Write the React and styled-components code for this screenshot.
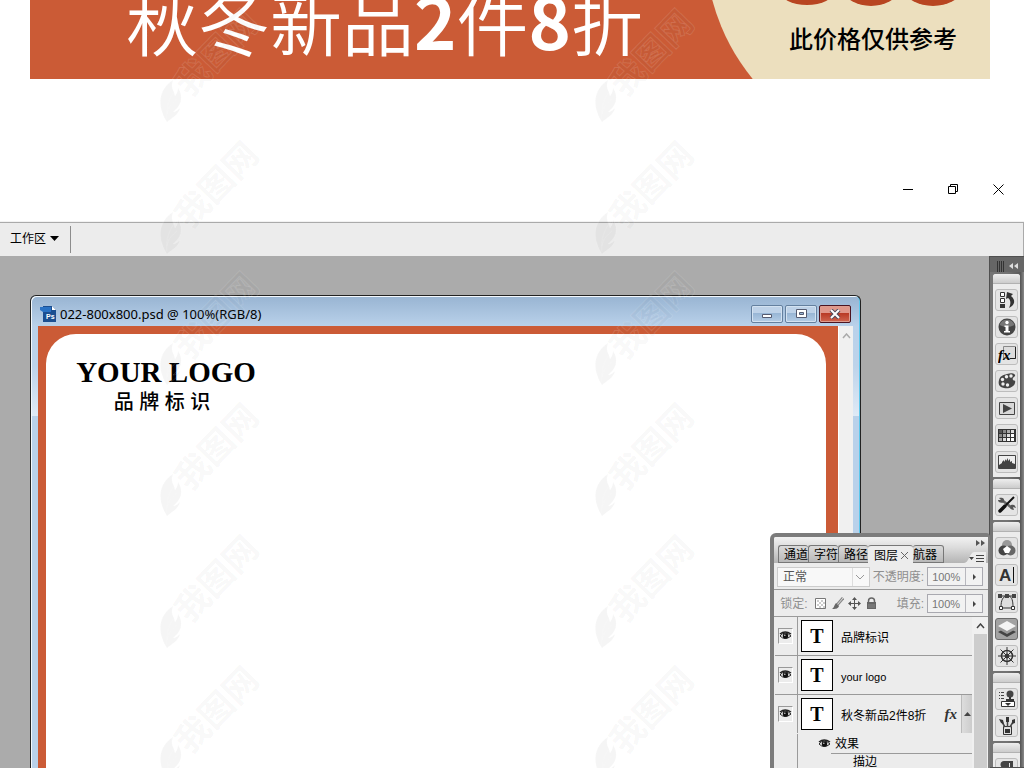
import { useState } from 'react'
import styled, { createGlobalStyle } from 'styled-components'

const GlobalStyle = createGlobalStyle`
  * {
    box-sizing: border-box;
  }
  body {
    margin: 0;
    background: #fff;
    color: #000;
    font-family: "Liberation Sans", "Noto Sans CJK SC", sans-serif;
    font-size: 12px;
    line-height: 16px;
  }
  button, input, select {
    font: inherit;
    color: inherit;
    padding: 0;
    margin: 0;
    border: 0;
    border-radius: 0;
    background: none;
  }
  svg {
    display: block;
    flex: none;
  }
`

const Page = styled.div`
  position: relative;
  display: flex;
  flex-direction: column;
  height: 100vh;
  overflow: hidden;
`

/* ---------- promo banner ---------- */

const Banner = styled.section`
  display: flex;
  justify-content: space-between;
  flex: none;
  height: 79px;
  margin: 0 34px 0 30px;
  background: #cb5b36;
  overflow: hidden;
`

const Headline = styled.h1`
  display: flex;
  align-items: flex-end;
  margin: 0 0 16px 96px;
  color: #fff;
  font-family: "Noto Sans CJK SC", sans-serif;
  font-size: 72px;
  font-weight: 350;
  line-height: 88px;
  white-space: nowrap;

  b {
    font-weight: 700;
  }
`

const PriceArea = styled.div`
  display: grid;
  width: 280px;

  > * {
    grid-area: 1 / 1;
  }
`

const PriceNote = styled.p`
  margin: 22px 0 0 79px;
  font-family: "Noto Sans CJK SC", sans-serif;
  font-size: 24px;
  font-weight: 500;
  line-height: 32px;
`

/* ---------- application frame ---------- */

const AppControls = styled.div`
  display: flex;
  flex: none;
  justify-content: flex-end;
  height: 66px;
  margin-top: 77px;
  padding-right: 3px;
`

const AppControl = styled.button`
  display: flex;
  align-items: center;
  justify-content: center;
  width: 45px;
`

const OptionsBar = styled.div`
  display: flex;
  flex: none;
  height: 34px;
  padding: 3px 0;
  background: #ececec;
  border-top: 1px solid #aaa;
  border-right: 1px solid #aaa;
  box-shadow: 0 -1px 0 #f2f2f2;
`

const WorkspaceButton = styled.button`
  display: flex;
  align-items: center;
  gap: 4px;
  width: 71px;
  padding-left: 10px;
  padding-bottom: 2px;
  border-right: 1px solid #8c8c8c;
`

const Desktop = styled.main`
  position: relative;
  display: flex;
  flex: 1;
  min-height: 0;
  background: #ababab;
`

/* ---------- document window ---------- */

const DocWindow = styled.section`
  display: flex;
  flex: 1;
  flex-direction: column;
  min-width: 0;
  margin: 39px 128px 0 30px;
  padding: 0 7px;
  border: 1px solid #222;
  border-bottom: 0;
  border-radius: 6px 6px 0 0;
  background: linear-gradient(#98b4d2 0, #b9d1ea 30px, #bdd3ea 70px, #dfeaf6 120px, #b9d1ea 120px);
  box-shadow: inset 1px 1px 0 #f4f9fd, inset -1px 0 0 #5cc8ec;
`

const TitleBar = styled.header`
  display: flex;
  align-items: center;
  flex: none;
  gap: 4px;
  height: 30px;
  padding: 6px 2px 0 2px;
`

const DocTitle = styled.h2`
  flex: 1;
  margin: 0;
  font-family: "Noto Sans", sans-serif;
  font-size: 13px;
  font-weight: 400;
`

const WindowButtons = styled.div`
  display: flex;
  gap: 2px;
`

const WindowButton = styled.button`
  display: flex;
  align-items: center;
  justify-content: center;
  width: 32px;
  height: 18px;
  border: 1px solid ${(props) => (props.$close ? '#4c1420' : '#64809f')};
  border-radius: 2px;
  box-shadow: inset 0 0 0 1px ${(props) => (props.$close ? '#dd9c8f' : '#d3e2f1')};
  background: ${(props) =>
    props.$close
      ? 'linear-gradient(#e0978a 45%, #b93a25 46%, #cf6650)'
      : 'linear-gradient(#bed2e8 45%, #98b6d5 46%, #b4cde6)'};
`

const DocBody = styled.div`
  display: flex;
  flex: 1;
  min-height: 0;
`

const Canvas = styled.div`
  display: flex;
  flex: 1;
  padding: 8px 12px 0 8px;
  background: #cb5b36;
`

const Artboard = styled.div`
  flex: 1;
  padding: 22px 0 0 29px;
  border-radius: 30px 30px 0 0;
  background: #fff;
`

const Brand = styled.div`
  display: flex;
  flex-direction: column;
  align-items: center;
  width: 182px;
  white-space: nowrap;
`

const BrandName = styled.div`
  font-family: "Liberation Serif", serif;
  font-size: 29px;
  font-weight: 700;
  line-height: 32px;
`

const BrandSub = styled.div`
  font-size: 20px;
  font-weight: 500;
  line-height: 28px;
  padding-right: 8px;
`

const ScrollTrack = styled.div`
  display: flex;
  justify-content: center;
  width: 15px;
  padding-top: 7px;
  border-left: 1px solid #fff;
  background: #f0f0f0;
`

/* ---------- icon dock ---------- */

const Dock = styled.nav`
  display: flex;
  flex-direction: column;
  flex: none;
  gap: 2px;
  width: 35px;
  padding: 0 4px 0 3px;
  border: 1px solid #505050;
  border-right: 0;
  background: linear-gradient(90deg, #747474 50%, #5a5a5a 90%, #8a8a8a);
  overflow: hidden;
`

const DockHead = styled.div`
  display: flex;
  align-items: center;
  justify-content: space-between;
  flex: none;
  height: 15px;
  margin: 0 -4px 0 -3px;
  padding: 3px 5px 0 7px;
  background: #666;
`

const DockGroup = styled.div`
  display: flex;
  flex-direction: column;
  align-items: center;
  flex: none;
  gap: 5px;
  padding-bottom: 4px;
  border-radius: 3px 3px 0 0;
  background: #ececec;
  overflow: hidden;

  &::before {
    content: "";
    width: 100%;
    height: 9px;
    border-bottom: 1px solid #b2b2b2;
    background: linear-gradient(#eee, #ccc);
  }
`

const DockButton = styled.button`
  display: flex;
  align-items: center;
  justify-content: center;
  width: 23px;
  height: 22px;
  border: 1px solid ${(props) => (props.$active ? '#6a6a6a' : '#bdbdbd')};
  border-radius: 3px;
  background: ${(props) => (props.$active ? '#a2a2a2' : '#e4e4e4')};
`

/* ---------- layers panel ---------- */

const Panel = styled.aside`
  position: absolute;
  top: 277px;
  right: 34px;
  bottom: 0;
  display: flex;
  flex-direction: column;
  width: 220px;
  border: solid #7c7c7c;
  border-width: 4px 2px 0 4px;
  border-radius: 6px 4px 0 0;
  background: #ececec;
  overflow: hidden;
`

const PanelHead = styled.div`
  display: flex;
  justify-content: space-between;
  flex: none;
  height: 26px;
  padding: 0 2px 0 4px;
  background: linear-gradient(#f2f2f2, #dcdcdc 40%, #b4b4b4);
`

const Tabs = styled.div`
  display: flex;
  align-self: flex-end;
`

const Tab = styled.button`
  display: flex;
  align-items: center;
  gap: 3px;
  width: ${(props) => (props.$active ? 45 : 30)}px;
  height: 18px;
  padding-top: 2px;
  padding-left: ${(props) => (props.$active ? 6 : 5)}px;
  border: solid #777;
  border-width: 1px 0 ${(props) => (props.$active ? 0 : 1)}px ${(props) => (props.$active ? 0 : 1)}px;
  border-radius: 3px 3px 0 0;
  background: ${(props) => (props.$active ? '#ececec' : 'linear-gradient(#dadada, #b8b8b8)')};
  white-space: nowrap;

  &:last-child {
    width: 31px;
    padding-left: 0;
    border-width: 1px 1px 1px 0;
  }
`

const PanelCorner = styled.div`
  display: flex;
  flex-direction: column;
  align-items: flex-end;
  justify-content: space-between;
  padding-top: 3px;
`

const ControlRow = styled.div`
  display: flex;
  align-items: center;
  flex: none;
  gap: 3px;
  height: 27px;
  padding: 1px 5px 0 3px;
  border-bottom: 1px solid #9a9a9a;
  color: #8f8f8f;

  label {
    margin-left: auto;
    white-space: nowrap;
  }
`

const SelectBox = styled.div`
  display: grid;
  align-items: center;
  width: 93px;
  height: 20px;
  border: 1px solid #ccc;
  background: #f8f8f8;

  select, svg {
    grid-area: 1 / 1;
  }
  svg {
    justify-self: end;
    margin-right: 3px;
    pointer-events: none;
  }
`

const BlendSelect = styled.select`
  appearance: none;
  height: 18px;
  padding-left: 5px;
  color: #555;
`

const Percent = styled.div`
  display: flex;
  align-items: center;
  width: 56px;
  height: 19px;
  border: 1px solid #a9a9b0;
  background: #f2f2f2;
`

const PercentInput = styled.input`
  width: 38px;
  height: 17px;
  padding-left: 4px;
  border-right: 1px solid #b8b8be;
  color: #777;
  font-size: 11px;
`

const PercentArrow = styled.button`
  display: flex;
  flex: 1;
  justify-content: center;
`

const LockIcons = styled.div`
  display: flex;
  gap: 4px;
  margin-left: 3px;
`

const LockButton = styled.button`
  display: flex;
`

const LayerArea = styled.div`
  display: flex;
  flex: 1;
  min-height: 0;
  padding-left: 1px;
`

const LayerList = styled.ul`
  flex: 1;
  margin: 0;
  padding: 0;
  list-style: none;
  overflow: hidden;
`

const Layer = styled.li`
  display: flex;
  height: 39px;
  border-bottom: 1px solid ${(props) => (props.$open ? '#ececec' : '#9a9a9a')};
`

const EyeCell = styled.div`
  display: flex;
  align-items: center;
  width: 23px;
  padding-left: 3px;
  border-right: 1px solid #9a9a9a;
`

const EyeButton = styled.button`
  display: flex;
  align-items: center;
  justify-content: center;
  width: 15px;
  height: 16px;
  border: 1px solid;
  border-color: #999 #fff #fff #999;
`

const Thumb = styled.div`
  width: 32px;
  height: 32px;
  margin: 3px 8px 0 3px;
  border: 1px solid #000;
  background: #fff;
  font: 700 20px/31px "Liberation Serif", serif;
  text-align: center;
`

const LayerName = styled.span`
  flex: 1;
  align-self: center;
  padding-top: 3px;
  font-size: ${(props) => (props.$latin ? 11 : 12)}px;
  white-space: nowrap;
`

const Fx = styled.i`
  align-self: center;
  margin-right: 4px;
  color: #333;
  font: italic 700 15px/18px "Liberation Serif", serif;
`

const Collapse = styled.button`
  display: flex;
  align-items: center;
  justify-content: center;
  width: 11px;
  border-left: 1px solid #bbb;
  background: linear-gradient(90deg, #ddd, #ccc);
`

const Effects = styled.li`
  display: flex;
  height: 60px;
`

const EffectLines = styled.div`
  flex: 1;
  padding-left: 20px;
`

const EffectHead = styled.div`
  display: flex;
  align-items: center;
  gap: 4px;
  height: 19px;
`

const EffectItem = styled.div`
  margin-left: 13px;
  padding-left: 22px;
  border-top: 1px solid #9a9a9a;
`

const PanelScroll = styled.div`
  display: flex;
  flex-direction: column;
  align-items: center;
  width: 16px;
  padding-top: 6px;
  background: #f0f0f0;
`

const ScrollThumb = styled.div`
  flex: 1;
  width: 13px;
  margin-top: 5px;
  background: #cdcdcd;
`

/* ---------- watermark ---------- */

const WatermarkLayer = styled.svg`
  position: absolute;
  inset: 0;
  width: 100%;
  height: 100%;
  pointer-events: none;
`

const WatermarkText = styled.text`
  font-family: "Noto Sans CJK SC", sans-serif;
  font-size: 34px;
  font-weight: 700;
`

const Watermark = () => (
  <WatermarkLayer aria-hidden="true">
    {[160, 595].map((x) =>
      [8, 140, 271, 402, 534, 665].map((y) => (
        <g
          key={x + '-' + y}
          transform={`translate(${x} ${y})`}
          fill="#444"
          fillOpacity="0.05"
          stroke="#fff"
          strokeOpacity="0.12"
        >
          <path d="M7 114C-3 98-2 82 13 72c-3 8 1 10 2 16 2-3 3-5 3-8 6 9 3 18-5 24 3 0 5-2 7-4-2 7-7 9-13 14z" />
          <path d="M7 112c-2-13 3-23 9-31M7 106c1-7 5-11 10-15" fill="none" />
          <WatermarkText transform="translate(30 90) rotate(-46)">我图网</WatermarkText>
        </g>
      ))
    )}
  </WatermarkLayer>
)

/* ---------- icons ---------- */

const Eye = () => (
  <svg width="13" height="10" viewBox="0 0 13 10">
    <path d="M1 5Q6-1 12 5Q6 10 1 5z" fill="#fff" stroke="#222" />
    <path d="M1 3Q6-1 12 3" fill="none" stroke="#222" strokeWidth="1.5" />
    <circle cx="6.5" cy="5" r="2.8" fill="#111" />
    <circle cx="5.8" cy="4.2" r=".8" fill="#ccc" />
  </svg>
)

const Triangle = ({ d, w = 9, h = 5, fill = '#000' }) => (
  <svg width={w} height={h}>
    <path d={d} fill={fill} />
  </svg>
)

const dockIcons = {
  历史记录: (
    <>
      <path d="M2.5 1.500h4v4h-4zM2.500 7.500h4v4h-4z" fill="#fff" stroke="#333" />
      <path d="M2 13h5v4H2z" fill="#333" />
      <path d="M8 8l1-7 6 2-2 2c5 4 4 9-2 12 2-4 2-8-1-10z" fill="#333" />
    </>
  ),
  信息: (
    <>
      <circle cx="9" cy="9" r="8.500" fill="#444" />
      <path d="M1.500 7a8 8 0 0 1 15 0Q9 11 1.500 7z" fill="#777" />
      <circle cx="9" cy="4.500" r="1.700" fill="#fff" />
      <path d="M6.500 7.500h4v5.500h1.500v1.500h-6V13h1.500V9H6.500z" fill="#fff" />
    </>
  ),
  样式: (
    <>
      <path d="M5.500 1.500h12v12h-12z" fill="#ddd" stroke="#888" />
      <path d="M17.500 2v11.500H12" fill="none" stroke="#222" />
      <text x="0" y="15" fontFamily="Liberation Serif" fontSize="15" fontStyle="italic" fontWeight="700">fx</text>
    </>
  ),
  颜色: (
    <>
      <path d="M9 2c5-2 9 0 8 2-1 1-3 2-2 4 1 1 3 0 2 3-1 4-6 6-11 5S0 12 1 8s4-5 8-6z" fill="#444" />
      <g fill="#eee">
        <circle cx="4.500" cy="7.500" r="1.700" /><circle cx="8.500" cy="4.700" r="1.700" />
        <circle cx="13" cy="4" r="1.700" /><circle cx="5" cy="12" r="1.700" /><circle cx="9.500" cy="13" r="1.700" />
      </g>
    </>
  ),
  动作: (
    <>
      <path d="M1.500 3.500h15v12h-15z" fill="#d8d8d8" stroke="#444" />
      <path d="M5 5v9l9-4.500z" fill="#444" />
    </>
  ),
  色板: (
    <>
      <path d="M0 3h18v13H0z" fill="#333" />
      {[0, 1, 2, 3].map((c) =>
        [0, 1, 2].map((r) => (
          <rect key={c + '' + r} x={1 + c * 4} y={4 + r * 4} width="3" height="3" fill={['#555', '#888', '#aaa', '#ddd', '#fff', '#fff'][c + r]} />
        ))
      )}
    </>
  ),
  直方图: (
    <>
      <path d="M.5 2.500h17v13H.500z" fill="#eee" stroke="#444" />
      <path d="M1 15v-3l3-2V9l2-2v2l2-3v2l2-3v3l2-2v3l2-1v2l3 1v4z" fill="#444" />
    </>
  ),
  工具预设: (
    <>
      <path d="M5 5l9 7" stroke="#666" strokeWidth="2.500" />
      <path d="M1 2c3-1 6 0 5 4-3 2-6 0-6-2h3zM13 9c3-1 4 0 5 3l-3-1 1 3c-3 0-5-2-3-5z" fill="#555" />
      <path d="M16 1L8 9" stroke="#111" strokeWidth="2" />
      <path d="M7 10l-5 5" stroke="#111" strokeWidth="3.500" strokeLinecap="round" />
    </>
  ),
  通道: (
    <>
      <circle cx="9" cy="6" r="5" fill="#999" />
      <circle cx="5.500" cy="11.500" r="5" fill="#444" />
      <circle cx="12.500" cy="11.500" r="5" fill="#666" />
      <path d="M9 7l4 3-2 4H7l-2-4z" fill="#fff" />
    </>
  ),
  字符: (
    <>
      <text x="1" y="15" fontFamily="Liberation Sans" fontSize="17" fontWeight="700" fill="#333">A</text>
      <path d="M15.500 1v16" stroke="#111" />
    </>
  ),
  路径: (
    <>
      <path d="M3 15c0-6 1-10 4-11h4c3 1 4 5 4 11z" fill="#ddd" />
      <path d="M3 14c0-7 2-10 5-11h3c3 1 4 5 4 11M0 3h18M3 15h12" stroke="#333" fill="none" />
      <path d="M0 1h4v4H0zM7 1h4v4H7zM14 1h4v4h-4z" fill="#444" />
      <path d="M1.500 13.500h3v3h-3zM13.500 13.500h3v3h-3z" fill="#fff" stroke="#333" />
    </>
  ),
  图层: (
    <>
      <path d="M0 12l9-5 9 5-9 5z" fill="#444" />
      <path d="M0 9l9-5 9 5-9 5z" fill="#999" />
      <path d="M0 6l9-5 9 5-9 5z" fill="#f4f4f4" />
    </>
  ),
  导航器: (
    <g fill="none" stroke="#333">
      <circle cx="9" cy="9" r="5.500" strokeWidth="1.500" />
      <circle cx="9" cy="9" r="2" fill="#333" />
      <path d="M9 0v18M0 9h18M2.500 2.500l13 13M15.500 2.500l-13 13" />
    </g>
  ),
  仿制源: (
    <>
      <path d="M1 2.500h5M1 5.500h5M1 8.500h5" stroke="#444" strokeDasharray="1 1 3 0" />
      <circle cx="12" cy="4" r="3.500" fill="#444" />
      <path d="M11 7h2v2h3v2H8V9h3z" fill="#333" />
      <path d="M3.500 11.500h13v5h-13z" fill="#fff" stroke="#333" />
      <path d="M7 13h6l-3 3z" fill="#333" />
    </>
  ),
  画笔: (
    <>
      <path d="M5.500 9.500h8v8h-8z" fill="#ddd" stroke="#333" />
      <path d="M7 12h5v4H7z" fill="#333" />
      <path d="M7 10L4 5M9.500 10V4M12 10l3-5" stroke="#444" strokeWidth="1.500" />
      <path d="M1 2l4 1 1 4-3-1zM8 0h3v5H8zM14 3l3-1v4l-3 1z" fill="#333" />
    </>
  ),
  段落: (
    <>
      <path d="M6 1h9v16h-3V3h-1v14H8V9C1 9 1 1 6 1z" fill="#444" />
    </>
  ),
}

const dockGroups = [
  ['历史记录', '信息', '样式', '颜色', '动作', '色板', '直方图'],
  ['工具预设'],
  ['通道', '字符', '路径', '图层', '导航器'],
  ['仿制源', '画笔'],
  ['段落'],
]

const layers = [
  { name: '品牌标识' },
  { name: 'your logo', latin: true },
  { name: '秋冬新品2件8折', fx: true },
]

const PercentField = ({ id }) => (
  <Percent>
    <PercentInput id={id} defaultValue="100%" />
    <PercentArrow aria-label="调整">
      <Triangle d="M0 0l3 3-3 3z" w={3} h={6} fill="#444" />
    </PercentArrow>
  </Percent>
)

const LayersPanel = () => {
  const [active, setActive] = useState('图层')

  return (
    <Panel>
      <PanelHead>
        <Tabs>
          {['通道', '字符', '路径', '图层', '航器'].map((tab) => (
            <Tab key={tab} $active={tab === active} onClick={() => setActive(tab)}>
              {tab}
              {tab === active && (
                <svg width="7" height="7">
                  <path d="M0 0l7 7M7 0L0 7" stroke="#666" />
                </svg>
              )}
            </Tab>
          ))}
        </Tabs>
        <PanelCorner>
          <Triangle d="M0 0l4 3-4 3zM5 0l4 3-4 3z" w={10} h={6} fill="#555" />
          <svg width="22" height="11">
            <path d="M0 11C5 11 5 1 10 0h12v11z" fill="#ececec" />
            <path d="M5 5h5L7.500 8zM12 3h8v1h-8zM12 6h8v1h-8zM12 9h8v1h-8z" fill="#444" />
          </svg>
        </PanelCorner>
      </PanelHead>

      <ControlRow>
        <SelectBox>
          <BlendSelect aria-label="混合模式">
            <option>正常</option>
          </BlendSelect>
          <svg width="14" height="18">
            <path d="M.5 0v18" stroke="#ddd" />
            <path d="M4 7l4 4 4-4" stroke="#999" fill="none" />
          </svg>
        </SelectBox>
        <label htmlFor="opacity">不透明度:</label>
        <PercentField id="opacity" />
      </ControlRow>

      <ControlRow>
        <span>&nbsp;锁定:</span>
        <LockIcons>
          <LockButton aria-label="锁定透明像素">
            <svg width="13" height="13">
              <path d="M1.500 1.500h10v10h-10z" fill="#fff" stroke="#777" />
              <path d="M3 3h2v2H3zM7 3h2v2H7zM5 5h2v2H5zM9 5h2v2H9zM3 7h2v2H3zM7 7h2v2H7zM5 9h2v2H5zM9 9h2v2H9z" fill="#ccc" />
            </svg>
          </LockButton>
          <LockButton aria-label="锁定图像像素">
            <svg width="13" height="13">
              <path d="M12 1L6 8" stroke="#888" strokeWidth="3" />
              <path d="M12 1L6 8" stroke="#ddd" />
              <path d="M5 6l3 3c-1 3-4 3-7 3 2-1 2-4 4-6z" fill="#666" />
            </svg>
          </LockButton>
          <LockButton aria-label="锁定位置">
            <svg width="13" height="13">
              <path d="M6.500 1v11M1 6.500h11" stroke="#555" />
              <path d="M4 3l2.500-3L9 3zM4 10l2.500 3L9 10zM3 4L0 6.500 3 9zM10 4l3 2.500L10 9z" fill="#555" />
            </svg>
          </LockButton>
          <LockButton aria-label="锁定全部">
            <svg width="13" height="13">
              <path d="M3.500 6V4a3 3 0 0 1 6 0v2" fill="none" stroke="#666" strokeWidth="1.500" />
              <path d="M2 5h9v7H2z" fill="#666" />
              <path d="M3 8h7M3 10h7" stroke="#888" />
            </svg>
          </LockButton>
        </LockIcons>
        <label htmlFor="fill">填充:</label>
        <PercentField id="fill" />
      </ControlRow>

      <LayerArea>
        <LayerList>
          {layers.map((layer) => (
            <Layer key={layer.name} $open={layer.fx}>
              <EyeCell>
                <EyeButton aria-label="可见性">
                  <Eye />
                </EyeButton>
              </EyeCell>
              <Thumb>T</Thumb>
              <LayerName $latin={layer.latin}>{layer.name}</LayerName>
              {layer.fx && (
                <>
                  <Fx>fx</Fx>
                  <Collapse aria-label="折叠效果">
                    <Triangle d="M0 4l3.500-4L7 4z" w={7} h={4} fill="#444" />
                  </Collapse>
                </>
              )}
            </Layer>
          ))}
          <Effects>
            <EyeCell />
            <EffectLines>
              <EffectHead>
                <Eye />
                效果
              </EffectHead>
              <EffectItem>描边</EffectItem>
            </EffectLines>
          </Effects>
        </LayerList>
        <PanelScroll>
          <svg width="9" height="6">
            <path d="M1 5l3.500-4L8 5" fill="none" stroke="#444" strokeWidth="1.500" />
          </svg>
          <ScrollThumb />
        </PanelScroll>
      </LayerArea>
    </Panel>
  )
}

const App = () => (
  <Page>
    <GlobalStyle />

    <Banner>
      <Headline>
        <span>秋冬新品<b>2</b>件<b>8</b>折</span>
      </Headline>
      <PriceArea>
        <svg width="280" height="79">
          <circle cx="207" cy="-55" r="212" fill="#ecdfbe" />
          <g fill="#b84521">
            <ellipse cx="97" cy="-9" rx="27" ry="14" />
            <ellipse cx="161" cy="-9" rx="26" ry="15" />
            <ellipse cx="223" cy="-9" rx="27" ry="15" />
          </g>
        </svg>
        <PriceNote>此价格仅供参考</PriceNote>
      </PriceArea>
    </Banner>

    <AppControls>
      <AppControl aria-label="最小化">
        <svg width="11" height="11">
          <path d="M0 5.500h10" stroke="#000" />
        </svg>
      </AppControl>
      <AppControl aria-label="还原">
        <svg width="11" height="11">
          <path d="M.5 2.500h7v7h-7zM2.500 2.500v-2h7v7h-2" fill="none" stroke="#000" />
        </svg>
      </AppControl>
      <AppControl aria-label="关闭">
        <svg width="11" height="11">
          <path d="M.5 .500l10 10M10.500 .500l-10 10" stroke="#000" />
        </svg>
      </AppControl>
    </AppControls>

    <OptionsBar>
      <WorkspaceButton>
        工作区
        <Triangle d="M0 0h9L4.500 5z" />
      </WorkspaceButton>
    </OptionsBar>

    <Desktop>
      <DocWindow>
        <TitleBar>
          <svg width="16" height="16">
            <path d="M3 0h9l4 4v12H3z" fill="#1c4f91" />
            <path d="M12 0l4 4h-4z" fill="#fff" />
            <path d="M0 1h11v5H3L0 4z" fill="#2a72c4" />
            <text x="6" y="13" fontFamily="Liberation Sans" fontSize="7" fontWeight="700" fill="#fff">Ps</text>
          </svg>
          <DocTitle>022-800x800.psd @ 100%(RGB/8)</DocTitle>
          <WindowButtons>
            <WindowButton aria-label="最小化文档">
              <svg width="12" height="10">
                <path d="M1.500 5.500h9v3h-9z" fill="#fff" stroke="#555b70" />
              </svg>
            </WindowButton>
            <WindowButton aria-label="最大化文档">
              <svg width="11" height="10">
                <path d="M.5 .500h10v8H.500zM3.500 3.500v2h4v-2z" fill="#fff" fillRule="evenodd" stroke="#555b70" />
              </svg>
            </WindowButton>
            <WindowButton $close aria-label="关闭文档">
              <svg width="12" height="10">
                <path d="M2 1l8 8M10 1L2 9" stroke="#4f4a5c" strokeWidth="4" />
                <path d="M2 1l8 8M10 1L2 9" stroke="#fff" strokeWidth="2" />
              </svg>
            </WindowButton>
          </WindowButtons>
        </TitleBar>
        <DocBody>
          <Canvas>
            <Artboard>
              <Brand>
                <BrandName>YOUR LOGO</BrandName>
                <BrandSub>品 牌 标 识</BrandSub>
              </Brand>
            </Artboard>
          </Canvas>
          <ScrollTrack>
            <svg width="9" height="6">
              <path d="M1 5l3.500-4L8 5" fill="none" stroke="#aaa" strokeWidth="1.500" />
            </svg>
          </ScrollTrack>
        </DocBody>
      </DocWindow>

      <Dock>
        <DockHead>
          <svg width="8" height="11">
            <path d="M.5 0v11M2.500 0v11M4.500 0v11M6.500 0v11" stroke="#333" />
          </svg>
          <Triangle d="M4 0L0 3l4 3zM9 0L5 3l4 3z" w={10} h={6} fill="#ddd" />
        </DockHead>
        {dockGroups.map((group) => (
          <DockGroup key={group[0]}>
            {group.map((name) => (
              <DockButton key={name} aria-label={name} $active={name === '图层'}>
                <svg width="18" height="18">{dockIcons[name]}</svg>
              </DockButton>
            ))}
          </DockGroup>
        ))}
      </Dock>

      <LayersPanel />
    </Desktop>

    <Watermark />
  </Page>
)

export default App
